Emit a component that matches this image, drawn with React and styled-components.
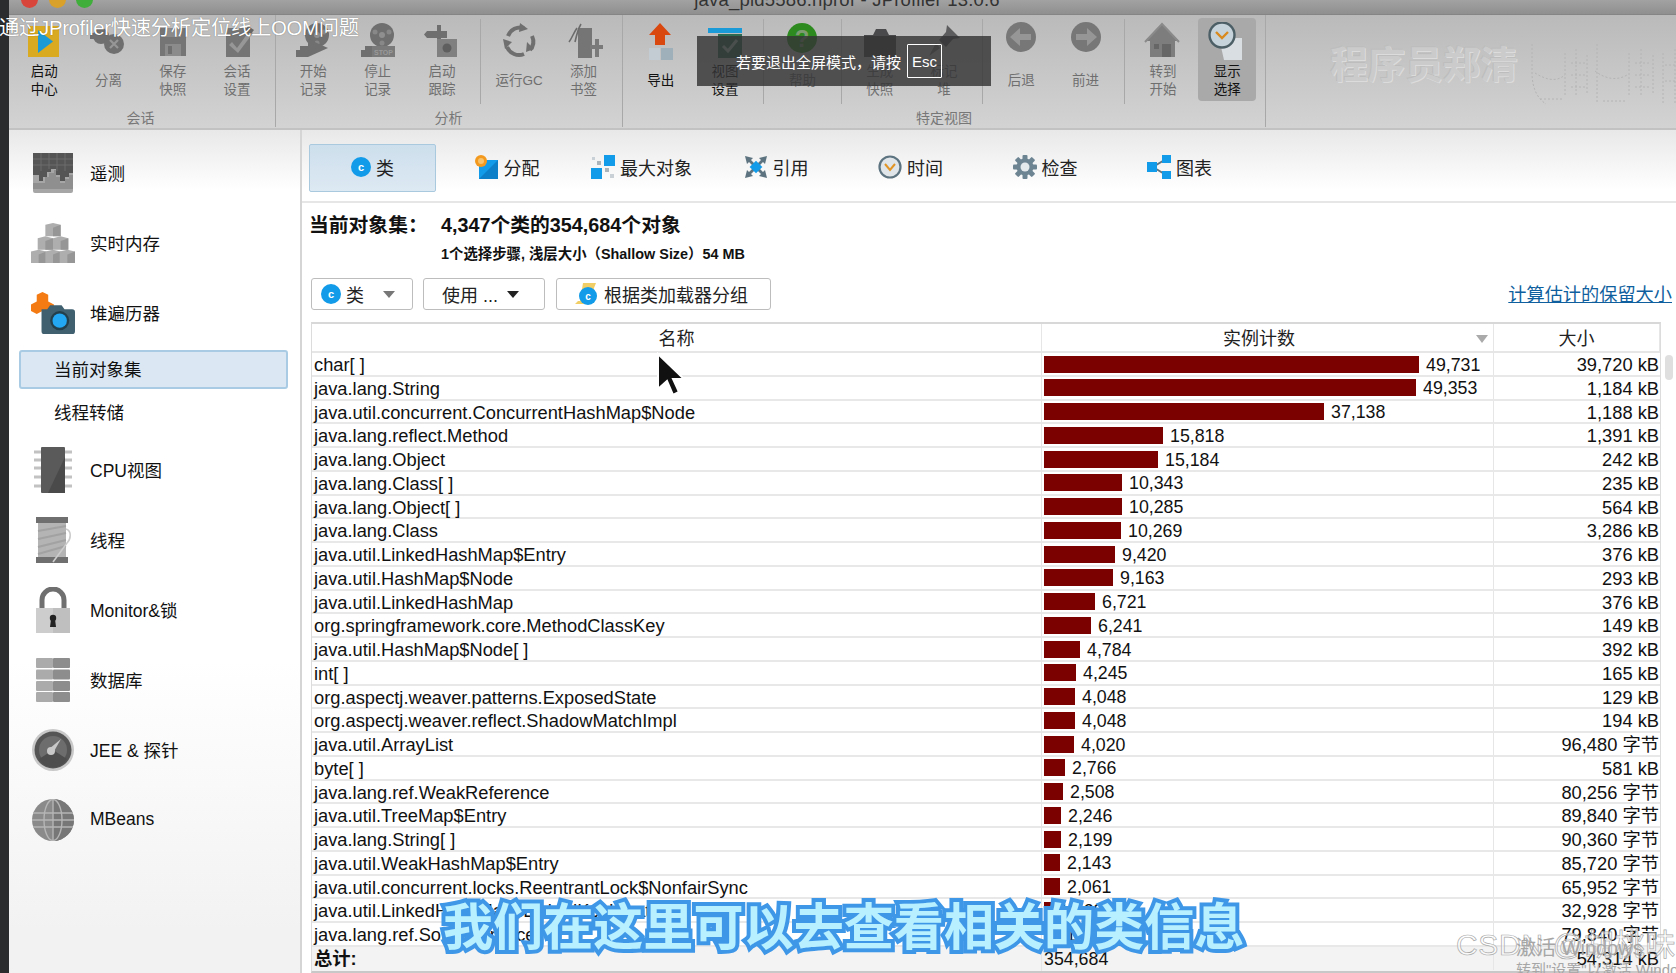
import React from "react";
import styled, { createGlobalStyle } from "styled-components";

const F = `"Liberation Sans", "Noto Sans CJK SC", sans-serif`;

const Global = createGlobalStyle`
  html, body { margin: 0; padding: 0; height: 100%; overflow: hidden; background: #fff; }
  * { box-sizing: border-box; }
  body { font-family: ${F}; color: #111; }
`;

const Page = styled.div`
  position: relative; width: 1676px; height: 973px; overflow: hidden;
  display: flex; background: #fff;
`;
const Edge = styled.div`width: 9px; flex: none; background: #2b2c2e;`;
const Body = styled.div`flex: 1; min-width: 0; display: flex; flex-direction: column;`;
const TitleBar = styled.div`
  height: 15px; flex: none; position: relative; overflow: hidden;
  background: linear-gradient(#a2a2a2, #8f8f8f);
  border-bottom: 1px solid #858585;
  display: flex; justify-content: center;
`;
const Lights = styled.div`
  position: absolute; left: 12px; top: -9px; display: flex; gap: 10.5px;
`;
const Light = styled.span`
  width: 17px; height: 17px; border-radius: 50%; background: ${p => p.$c};
`;
const TitleText = styled.div`
  font-size: 18.5px; line-height: 18px; color: #333; margin-top: -9px; margin-left: 9px; letter-spacing: .2px; white-space: nowrap;
`;
const Toolbar = styled.div`
  height: 115px; flex: none; display: flex; padding-left: 3px; position: relative;
  background: linear-gradient(#bababa, #d3d3d3);
  border-bottom: 2px solid #c2c2c2;
`;
const Group = styled.div`
  display: flex; flex-direction: column; align-items: center; height: 112px;
  border-right: 1px solid #a8a8a8; flex: none;
  padding: 0 6px 0 ${p => p.$pl}px;
`;
const GroupRow = styled.div`display: flex; height: 88px; padding-top: 3px;`;
const GroupName = styled.div`
  font-size: 14px; line-height: 18px; color: #777; margin-top: 6px;
`;
const ToolBtn = styled.div`
  width: ${p => p.$active ? 58 : 64.3}px; height: 83px; flex: none; display: flex; flex-direction: column; align-items: center;
  margin: 0 ${p => p.$active ? 3.15 : 0}px;
  border-radius: 4px; background: ${p => p.$active ? "#a9a9a9" : "transparent"};
`;
const ToolIcon = styled.div`
  width: 38px; height: 40px; flex: none; display: flex; align-items: center; justify-content: center;
  margin-top: 3px;
`;
const ToolLabel = styled.div`
  flex: 1; display: flex; align-items: center; text-align: center; justify-content: center;
  font-size: 13.5px; line-height: 18px; margin-top: -1px;
  color: ${p => p.$dark ? "#111" : "#6f6f6f"}; white-space: pre-line;
`;
const VSep = styled.div`width: 1px; height: 85px; margin: 1px 6px 0; background: #a8a8a8; flex: none;`;
const Stamp = styled.div`
  flex: none; margin-left: 64px; margin-top: 28px; height: 44px;
  font-size: 37.5px; line-height: 44px; font-weight: 700; color: #cbcbcb;
  text-shadow: 1px 1px 0 #dcdcdc, -1px -1px 0 #bdbdbd;
`;
const StampArt = styled.svg`flex: none; margin-left: 13px; margin-top: 26px;`;

const FsOverlay = styled.div`
  position: absolute; left: 697px; top: 36px; width: 294px; height: 50px; z-index: 5;
  background: rgba(52,52,54,.82); color: #fff; font-size: 15px;
  display: flex; align-items: center; justify-content: flex-start; padding-left: 39px; gap: 6px;
`;
const EscKey = styled.span`
  width: 35px; height: 34px; border: 1px solid #fff; border-radius: 1px; display: flex; align-items: center; justify-content: center;
  font-size: 15px;
`;
const VideoTitle = styled.div`
  position: absolute; left: -1px; top: 16px; z-index: 6; color: #fff; font-size: 20.4px; line-height: 24px; letter-spacing: -.35px; white-space: nowrap;
  text-shadow: 0 0 1px rgba(0,0,0,.5);
`;

const Main = styled.div`flex: 1; display: flex; min-height: 0;`;
const Side = styled.div`
  width: 293px; flex: none; border-right: 2px solid #d5d5d5; padding-top: 8px;
  background: linear-gradient(#e8e8e8 0, #fff 60px, #fff 530px, #f2f2f2 800px);
`;
const SideItem = styled.div`
  height: 70px; display: flex; align-items: center; font-size: 17.5px;
`;
const SideLabel = styled.span`margin-top: -2px;`;
const SideIcon = styled.div`
  width: 44px; height: 46px; margin-left: 22px; margin-right: 15px; flex: none;
  display: flex; align-items: center; justify-content: center;
`;
const SubList = styled.div`height: 87px; padding-top: 2px;`;
const SubItem = styled.div`
  height: ${p => p.$sel ? 39 : 46}px; margin: 0 12px 0 10px; display: flex; align-items: center; padding-left: 35px; font-size: 17.5px;
  padding-bottom: 2px;
  ${p => p.$sel && "background:#dbe8f3; border: 2px solid #a9cce4; border-radius: 3px; padding-left: 33px;"}
`;
const Content = styled.div`flex: 1; min-width: 0; display: flex; flex-direction: column;`;
const TabBar = styled.div`
  height: 73px; flex: none; display: flex; gap: 7.5px; padding: 14px 0 0 7px;
  background: linear-gradient(#e8e8e8, #fff 60px);
  border-bottom: 2px solid #e6e6e6;
`;
const Tab = styled.div`
  width: 127px; height: 48px; display: flex; align-items: center; justify-content: center; gap: 5px; font-size: 18px;
  padding-bottom: 2px;
  border-radius: 2px; color: #222;
  border: 1px solid ${p => p.$sel ? "#a9c9df" : "transparent"};
  background: ${p => p.$sel ? "linear-gradient(#cddfec,#dde9f3)" : "transparent"};
`;
const Info = styled.div`
  height: 75px; flex: none; padding: 10px 0 0 7px; font-weight: 700;
`;
const InfoRow = styled.div`display: flex; font-size: 19.8px; line-height: 24px;`;
const InfoLabel = styled.div`width: 132px; white-space: nowrap;`;
const InfoSub = styled.div`font-size: 14.4px; line-height: 20px; margin: 7px 0 0 132px;`;
const Actions = styled.div`
  height: 44px; flex: none; display: flex; padding: 0 4px 0 9px; align-items: flex-start;
`;
const Btn = styled.div`
  height: 32px; flex: none; width: ${p => p.$w}px; margin-right: ${p => p.$mr || 0}px;
  border: 1px solid #bdbdbd; border-radius: 3px; background: #fff; font-size: 18px;
  display: flex; align-items: center; gap: 5px; padding-left: ${p => p.$pl}px; color: #222;
`;
const Tri = styled.span`
  width: 0; height: 0; border-left: 6px solid transparent; border-right: 6px solid transparent;
  border-top: 7px solid ${p => p.$c}; margin-left: ${p => p.$ml}px;
`;
const CalcLink = styled.a`
  margin-left: auto; font-size: 18.2px; line-height: 34px; color: #0f5f9e; text-decoration: underline; white-space: nowrap;
`;
const TableWrap = styled.div`
  flex: 1; min-height: 0; margin-left: 9px; margin-right: 15px; border: 1px solid #dcdcdc; border-top: 2px solid #d8d8d8; border-bottom: 2px solid #c8c8c8;
  position: relative; display: flex; flex-direction: column;
`;
const HeadRow = styled.div`
  height: 29px; flex: none; display: grid; grid-template-columns: 730px 452px 1fr;
  border-bottom: 2px solid #e6e6e6; font-size: 18px; color: #222;
`;
const HeadCell = styled.div`
  display: flex; align-items: center; justify-content: center; position: relative;
  border-right: 1px solid #e6e6e6; padding-bottom: 3px; padding-right: ${p => p.$pr || 0}px;
`;
const SortMark = styled.span`
  position: absolute; right: 5px; top: 11px; width: 0; height: 0;
  border-left: 6px solid transparent; border-right: 6px solid transparent; border-top: 8px solid #aaa;
`;
const Row = styled.div`
  height: 23.75px; flex: none; display: grid; grid-template-columns: 730px 452px 1fr; font-size: 18.3px;
  border-bottom: 2px solid #e8e8e8; color: #111;
`;
const TotalRow = styled(Row)`background: #f3f3f3; border-bottom: 0; flex: 1; height: auto; align-items: center;`;
const NameCell = styled.div`
  padding-left: 2px; line-height: 24px; white-space: nowrap; border-right: 1px solid #e6e6e6; overflow: hidden;
  font-weight: ${p => p.$b ? 700 : 400};
`;
const CountCell = styled.div`
  display: flex; align-items: center; padding-left: 2px; border-right: 1px solid #e6e6e6; height: 22px; gap: 7px; font-size: 17.8px;
`;
const CountText = styled.span`padding-top: 2px;`;
const Bar = styled.span`height: 17px; background: #7b0000; flex: none;`;
const SizeCell = styled.div`text-align: right; padding-right: 1px; line-height: 24px; white-space: nowrap;`;
const Scroll = styled.div`
  position: absolute; left: 1665px; top: 355px; width: 8px; height: 25px; background: #dfdfdf; border-radius: 4px;
`;
const Pointer = styled.svg`position: absolute; left: 655px; top: 352px; z-index: 4;`;
const Subtitle = styled.div`
  position: absolute; left: 443px; top: 895px; z-index: 7; font-size: 50.1px; line-height: 66px; font-weight: 700; white-space: nowrap;
  color: #b8f0ff; -webkit-text-stroke: 8px #3f97e8; paint-order: stroke fill;
`;
const Mark = styled.div`
  position: absolute; left: 1456px; top: 927px; z-index: 8; color: rgba(255,255,255,.55); font-size: 30px; line-height: 36px; white-space: nowrap; letter-spacing: .7px;
  -webkit-text-stroke: .7px #a9a9a9;
`;
const WinMark = styled.div`
  position: absolute; left: 1516px; top: ${p => p.$t}px; z-index: 8; color: #a6a6a6; font-size: ${p => p.$s}px; line-height: 20px; white-space: nowrap;
`;

/* ---------- icons ---------- */
const Ico = ({ s = 38, h, children }) => (
  <svg width={s} height={h || s} viewBox="0 0 38 38">{children}</svg>
);
const IStart = () => (
  <Ico><rect x="3" y="4" width="31" height="31" fill="#d9a91f" /><path d="M13 8l15 11.5L13 31z" fill="#1b9ad8" /></Ico>
);
const IDetach = () => (
  <Ico><circle cx="12" cy="14" r="8" fill="#6f6f6f" /><rect x="1" y="11" width="10" height="6" fill="#6f6f6f" /><circle cx="25" cy="22" r="10" fill="#6f6f6f" /><path d="M21 18l8 8m0-8l-8 8" stroke="#969696" strokeWidth="2.2" /></Ico>
);
const ISave = () => (
  <Ico><path d="M6 6h26v28H6z" fill="#757575" /><rect x="11" y="6" width="16" height="9" fill="#8b8b8b" /><rect x="11" y="22" width="16" height="12" fill="#8b8b8b" /><rect x="14" y="24" width="4" height="8" fill="#6f6f6f" /></Ico>
);
const ISession = () => (
  <Ico><rect x="8" y="6" width="24" height="29" fill="#757575" /><path d="M14 20l5 6L32 8l3 3-15 20-9-8z" fill="#979797" /><path d="M30 4l6 4-4 5-5-4z" fill="#666" /></Ico>
);
const IRec = ({ stop }) => (
  <Ico>
    <circle cx="23" cy="13" r="12" fill="#6f6f6f" />
    <circle cx="23" cy="13" r="3" fill="#8f8f8f" />
    <circle cx="16" cy="10" r="2.5" fill="#888" /><circle cx="30" cy="10" r="2.5" fill="#888" /><circle cx="23" cy="21" r="2.5" fill="#888" />
    <path d="M6 24h8v11H2v-7h4z" fill="#6f6f6f" />
    {stop ? <g><rect x="13" y="24" width="23" height="11" fill="#7a7a7a" /><text x="24.5" y="33" textAnchor="middle" fontSize="7" fontWeight="700" fontFamily="Liberation Sans" fill="#999">STOP</text></g> : <path d="M14 17v18l20-9z" fill="#6f6f6f" />}
  </Ico>
);
const ITrack = () => (
  <Ico><path d="M14 3h4v6h6v7h-6v4h-4v-4H4l-3-3.5L4 9h10z" fill="#6f6f6f" /><rect x="14" y="17" width="20" height="18" fill="#808080" /><circle cx="24" cy="26" r="4.5" fill="#5f5f5f" /></Ico>
);
const IGc = () => (
  <Ico>
    <g fill="none" stroke="#6f6f6f" strokeWidth="4">
      <path d="M8 14a13 13 0 0 1 16-8" /><path d="M32 14a13 13 0 0 1-2 14" /><path d="M24 32a13 13 0 0 1-17-7" />
    </g>
    <path d="M20 1l8 6-9 3zM34 27l-8 3 1-10zM3 17l9 3-7 7z" fill="#6f6f6f" />
  </Ico>
);
const IBookmark = () => (
  <Ico><rect x="13" y="6" width="14" height="30" fill="#757575" /><path d="M12 6C8 12 7 16 4 20M16 2c-3 5-4 9-6 18" fill="none" stroke="#6c6c6c" strokeWidth="1.6" /><path d="M25 23h5v-6h4v6h5v4h-5v8h-4v-8h-5z" fill="#7a7a7a" /></Ico>
);
const IExport = () => (
  <Ico><path d="M18 1l11 12h-6v10h-10V13H7z" fill="#d9480f" /><rect x="7" y="26" width="11" height="12" fill="#c3ccd2" /><rect x="19" y="26" width="12" height="12" fill="#9fb0ba" /></Ico>
);
const IView = () => (
  <Ico><rect x="2" y="6" width="34" height="5" fill="#1b9ad8" /><rect x="12" y="12" width="24" height="24" fill="#2d6b52" /><path d="M17 24l5 5 9-11" fill="none" stroke="#a9c9b8" strokeWidth="3" /></Ico>
);
const IHelp = () => (
  <Ico><circle cx="19" cy="16" r="15" fill="#2d8a1e" /><text x="19" y="25" textAnchor="middle" fontSize="24" fontWeight="700" fontFamily="Liberation Sans" fill="#7d9a70">?</text></Ico>
);
const ICam = () => (
  <Ico><path d="M3 13h9l3-6h10l3 6h7v22H3z" fill="#4a4a4c" /></Ico>
);
const IPin = () => (
  <Ico><path d="M22 3l13 13-7 1-7 8-7-7 7-8z" fill="#5c5c5e" /><path d="M11 21l-7 13 11-8z" fill="#747476" /></Ico>
);
const IArrow = ({ right }) => (
  <Ico>
    <circle cx="19" cy="15" r="15" fill="#777" />
    <path d={right ? "M9 12h11V6l10 9-10 9v-6H9z" : "M29 12H18V6L8 15l10 9v-6h11z"} fill="#969696" />
  </Ico>
);
const IHome = () => (
  <Ico><path d="M18 2L2 19h4v16h25V19h4z" fill="#7d7d7d" /><path d="M1 20L18 2l17 18" fill="none" stroke="#8a8a8a" strokeWidth="2" /><rect x="18" y="22" width="9" height="13" fill="#666" /><rect x="10" y="22" width="5" height="5" fill="#666" /></Ico>
);
const IClockSel = () => (
  <Ico>
    <path d="M11 16h23v22H16z" fill="#d9dee2" />
    <circle cx="14" cy="13" r="12.5" fill="#c7d3da" stroke="#4c5e66" strokeWidth="2.4" />
    <path d="M8 10l6 6 6-6" fill="none" stroke="#d98a1f" strokeWidth="2.4" />
  </Ico>
);

const STelemetry = () => (
  <svg width="40" height="40" viewBox="0 0 40 40">
    <rect width="40" height="40" rx="2" fill="#a6a6a6" />
    <path d="M0 0h40v20h-4v4h-4v4h-5v-6h-4v-6h-5v3h-4v5h-4v4H6v-6H0z" fill="#555" />
    <path d="M12 24h4v-4h5v-3h2v7h4v6h5v-4h4v-4h4v14H0V30h12z" fill="#8f8f8f" />
    <path d="M0 6h40M0 12h40M8 0v18M16 0v16M24 0v18M32 0v18" stroke="#6c6c6c" strokeWidth="1" />
  </svg>
);
const SMem = () => (
  <svg width="46" height="42" viewBox="0 0 46 42">
    {[[15,0],[7,14],[23,14],[0,28],[15,28],[30,28]].map(([x,y],i)=>(
      <g key={i}><path d={`M${x} ${y+2}l8-2 8 2v12H${x}z`} fill="#aeaeae" /><path d={`M${x+8} ${y+5}l8-3v12h-8z`} fill="#969696" /></g>
    ))}
  </svg>
);
const SHeap = () => (
  <svg width="46" height="44" viewBox="0 0 46 44">
    <path d="M12 0l6 3v7l6 3v7l-6 3-6-3-6 3-6-3v-7l6-3V3z" fill="#f47b13" />
    <path d="M11 18h6l3-4h12l3 4h8a3 3 0 0 1 3 3v20a3 3 0 0 1-3 3H14a3 3 0 0 1-3-3z" fill="#40606f" />
    <circle cx="30" cy="30" r="10" fill="#243f4c" /><circle cx="30" cy="30" r="7.5" fill="#23a7f2" />
  </svg>
);
const SCpu = () => (
  <svg width="38" height="46" viewBox="0 0 38 46">
    <path d="M0 5h38M0 13h38M0 21h38M0 30h38M0 39h38" stroke="#c2c2c2" strokeWidth="3" />
    <rect x="7" y="0" width="24" height="46" rx="1" fill="#5a5a5a" />
    <path d="M31 10L14 46h17z" fill="#4a4a4a" />
  </svg>
);
const SThread = () => (
  <svg width="40" height="46" viewBox="0 0 40 46">
    <rect x="3" y="0" width="32" height="6" fill="#6f6f6f" /><rect x="3" y="40" width="32" height="6" fill="#6f6f6f" />
    <rect x="5" y="6" width="28" height="34" fill="#b4b4b4" />
    <path d="M5 14l28-5M5 22l28-6M5 30l28-7M5 37l28-8" stroke="#a2a2a2" strokeWidth="2" />
    <path d="M33 12c6 2 5 10 1 14l-14 19" fill="none" stroke="#ccc" strokeWidth="1.6" />
  </svg>
);
const SLock = () => (
  <svg width="34" height="46" viewBox="0 0 34 46">
    <path d="M6 22V13a11 11 0 0 1 22 0v9" fill="none" stroke="#6f6f6f" strokeWidth="5" />
    <rect y="21" width="34" height="25" fill="#cdcdcd" /><rect x="17" y="21" width="17" height="25" fill="#bfbfbf" />
    <circle cx="17" cy="31" r="3.2" fill="#222" /><path d="M15 32h4l1 8h-6z" fill="#222" />
  </svg>
);
const SDb = () => (
  <svg width="34" height="44" viewBox="0 0 34 44">
    {[0,11.5,23,34].map((y,i)=>(
      <g key={i}><rect y={y} width="17" height="10" rx="1" fill="#ababab" /><rect x="17" y={y} width="17" height="10" rx="1" fill="#8d8d8d" /></g>
    ))}
  </svg>
);
const SJee = () => (
  <svg width="42" height="42" viewBox="0 0 42 42">
    <circle cx="21" cy="21" r="21" fill="#c8c8c8" /><circle cx="21" cy="21" r="18.5" fill="#555" />
    <circle cx="21" cy="21" r="14" fill="#6d6d6d" /><path d="M7 30a16 16 0 0 0 28 0L21 21z" fill="#4d4d4d" />
    <circle cx="19" cy="22" r="4" fill="#c8c8c8" /><path d="M17 20l12-10-8 14z" fill="#c8c8c8" />
  </svg>
);
const SGlobe = () => (
  <svg width="42" height="42" viewBox="0 0 42 42">
    <circle cx="21" cy="21" r="21" fill="#8a8a8a" /><path d="M21 0a21 21 0 0 1 0 42z" fill="#777" />
    <g fill="none" stroke="#b5b5b5" strokeWidth="1.4">
      <ellipse cx="21" cy="21" rx="9" ry="20.5" /><path d="M21 0v42M1 14h40M1 28h40M0 21h42" />
    </g>
  </svg>
);
const CBadge = ({ s = 20 }) => (
  <svg width={s} height={s} viewBox="0 0 20 20"><circle cx="10" cy="10" r="10" fill="#129be8" /><text x="10" y="14" textAnchor="middle" fontSize="11" fontWeight="700" fontFamily="Liberation Sans" fill="#fff">c</text></svg>
);
const TAlloc = () => (
  <svg width="24" height="24" viewBox="0 0 24 24"><rect x="4" y="5" width="19" height="19" fill="#129be8" /><path d="M23 5v19H4z" fill="#0d7fc8" /><circle cx="6" cy="6" r="6" fill="#f39a1e" /><circle cx="6" cy="6" r="3" fill="#f7c26a" /></svg>
);
const TBig = () => (
  <svg width="24" height="24" viewBox="0 0 24 24"><rect x="13" y="0" width="11" height="11" fill="#129be8" /><rect x="0" y="13" width="11" height="11" fill="#129be8" /><rect x="14" y="13" width="4" height="4" fill="#aab4ba" /><rect x="19" y="19" width="4" height="4" fill="#c9d1d6" /><rect x="6" y="6" width="4" height="4" fill="#aab4ba" /><rect x="1" y="2" width="3" height="3" fill="#c9d1d6" /></svg>
);
const TRef = () => (
  <svg width="24" height="24" viewBox="0 0 24 24"><path d="M1 1l8 2-2 2 5 5 5-5-2-2 8-2-2 8-2-2-5 5 5 5 2-2 2 8-8-2 2-2-5-5-5 5 2 2-8 2 2-8 2 2 5-5-5-5-2 2z" fill="#5d7480" /><rect x="7.5" y="7.5" width="9" height="9" transform="rotate(45 12 12)" fill="#129be8" /></svg>
);
const TClock = () => (
  <svg width="24" height="24" viewBox="0 0 24 24"><circle cx="12" cy="12" r="10.5" fill="#dfe5e8" stroke="#5d7480" strokeWidth="2.2" /><path d="M7 9l5 6 5-6" fill="none" stroke="#e29425" strokeWidth="2" /></svg>
);
const TGear = () => (
  <svg width="24" height="24" viewBox="0 0 24 24">
    <g fill="#6d8593">{[0,45,90,135].map(a=><rect key={a} x="9.5" y="0" width="5" height="24" rx="1" transform={`rotate(${a} 12 12)`} />)}</g>
    <circle cx="12" cy="12" r="8.5" fill="#6d8593" /><circle cx="12" cy="12" r="4.5" fill="#e4e9ec" />
  </svg>
);
const TGraph = () => (
  <svg width="24" height="24" viewBox="0 0 24 24"><path d="M6 12L19 4M6 12l13 8" stroke="#5d7480" strokeWidth="2" /><rect x="0" y="7" width="10" height="10" fill="#129be8" /><rect x="15" y="0" width="9" height="8" fill="#129be8" /><rect x="15" y="16" width="9" height="8" fill="#129be8" /></svg>
);
const GroupIcon = () => (
  <svg width="24" height="24" viewBox="0 0 24 24"><path d="M8 1h13l-2 5-2 16H0l3-3h2z" fill="#f2cf66" /><circle cx="13" cy="14" r="9" fill="#129be8" /><text x="13" y="18" textAnchor="middle" fontSize="10" fontWeight="700" fontFamily="Liberation Sans" fill="#fff">c</text></svg>
);

/* ---------- data ---------- */
const rows = [
  ["char[ ]", 49731, "39,720 kB"], ["java.lang.String", 49353, "1,184 kB"],
  ["java.util.concurrent.ConcurrentHashMap$Node", 37138, "1,188 kB"], ["java.lang.reflect.Method", 15818, "1,391 kB"],
  ["java.lang.Object", 15184, "242 kB"], ["java.lang.Class[ ]", 10343, "235 kB"],
  ["java.lang.Object[ ]", 10285, "564 kB"], ["java.lang.Class", 10269, "3,286 kB"],
  ["java.util.LinkedHashMap$Entry", 9420, "376 kB"], ["java.util.HashMap$Node", 9163, "293 kB"],
  ["java.util.LinkedHashMap", 6721, "376 kB"], ["org.springframework.core.MethodClassKey", 6241, "149 kB"],
  ["java.util.HashMap$Node[ ]", 4784, "392 kB"], ["int[ ]", 4245, "165 kB"],
  ["org.aspectj.weaver.patterns.ExposedState", 4048, "129 kB"], ["org.aspectj.weaver.reflect.ShadowMatchImpl", 4048, "194 kB"],
  ["java.util.ArrayList", 4020, "96,480 字节"], ["byte[ ]", 2766, "581 kB"],
  ["java.lang.ref.WeakReference", 2508, "80,256 字节"], ["java.util.TreeMap$Entry", 2246, "89,840 字节"],
  ["java.lang.String[ ]", 2199, "90,360 字节"], ["java.util.WeakHashMap$Entry", 2143, "85,720 字节"],
  ["java.util.concurrent.locks.ReentrantLock$NonfairSync", 2061, "65,952 字节"], ["java.util.LinkedHashMap$LinkedKeyIterator", 1029, "32,928 字节"],
  ["java.lang.ref.SoftReference", 1994, "79,840 字节"],
];
const fmt = n => n.toLocaleString("en-US");

const T = ({ icon, label, dark, active }) => (
  <ToolBtn $active={active}><ToolIcon>{icon}</ToolIcon><ToolLabel $dark={dark}>{label}</ToolLabel></ToolBtn>
);
const side = [
  [<STelemetry />, "遥测"], [<SMem />, "实时内存"], [<SHeap />, "堆遍历器"],
];
const side2 = [
  [<SCpu />, "CPU视图"], [<SThread />, "线程"], [<SLock />, "Monitor&锁"], [<SDb />, "数据库"], [<SJee />, "JEE & 探针"], [<SGlobe />, "MBeans"],
];
const tabs = [
  [<CBadge />, "类", true], [<TAlloc />, "分配"], [<TBig />, "最大对象"], [<TRef />, "引用"], [<TClock />, "时间"], [<TGear />, "检查"], [<TGraph />, "图表"],
];

export default function App() {
  return (
    <Page>
      <Global />
      <Edge />
      <Body>
        <TitleBar>
          <Lights><Light $c="#d8453a" /><Light $c="#d9a02a" /><Light $c="#3fae3a" /></Lights>
          <TitleText>java_pid5586.hprof - JProfiler 13.0.6</TitleText>
        </TitleBar>
        <Toolbar>
          <Group $pl={0}>
            <GroupRow>
              <T icon={<IStart />} label={"启动\n中心"} dark />
              <T icon={<IDetach />} label="分离" />
              <T icon={<ISave />} label={"保存\n快照"} />
              <T icon={<ISession />} label={"会话\n设置"} />
            </GroupRow>
            <GroupName>会话</GroupName>
          </Group>
          <Group $pl={5}>
            <GroupRow>
              <T icon={<IRec />} label={"开始\n记录"} />
              <T icon={<IRec stop />} label={"停止\n记录"} />
              <T icon={<ITrack />} label={"启动\n跟踪"} />
              <VSep />
              <T icon={<IGc />} label="运行GC" />
              <T icon={<IBookmark />} label={"添加\n书签"} />
            </GroupRow>
            <GroupName>分析</GroupName>
          </Group>
          <Group $pl={6}>
            <GroupRow>
              <T icon={<IExport />} label="导出" dark />
              <T icon={<IView />} label={"视图\n设置"} dark />
              <VSep />
              <T icon={<IHelp />} label="帮助" />
              <VSep />
              <T icon={<ICam />} label={"生成\n快照"} />
              <T icon={<IPin />} label={"标记\n堆"} />
              <VSep />
              <T icon={<IArrow />} label="后退" />
              <T icon={<IArrow right />} label="前进" />
              <VSep />
              <T icon={<IHome />} label={"转到\n开始"} />
              <T icon={<IClockSel />} label={"显示\n选择"} dark active />
            </GroupRow>
            <GroupName>特定视图</GroupName>
          </Group>
          <Stamp>程序员郑清</Stamp>
          <StampArt width="146" height="66" viewBox="0 0 146 66">
            <g fill="none" stroke="#b4b4b4" strokeWidth="1" strokeDasharray="2 2">
              <path d="M1 3v28c0 20 8 28 14 32M4 32c10 6 20 10 30 2M9 58h22" />
              <path d="M34 12v44M45 8v48M56 14v40M40 22h14M40 34h14M40 46h14" />
              <path d="M66 3v60M64 30c10 8 22 10 32 4M72 60h24" />
              <path d="M98 12v44M110 8v48M122 14v40M104 22h14M104 34h14M104 46h14" />
              <path d="M132 12v50M144 8v54M134 24h12M134 40h12" />
            </g>
          </StampArt>
        </Toolbar>
        <Main>
          <Side>
            {side.map(([i, l]) => <SideItem key={l}><SideIcon>{i}</SideIcon><SideLabel>{l}</SideLabel></SideItem>)}
            <SubList>
              <SubItem $sel>当前对象集</SubItem>
              <SubItem>线程转储</SubItem>
            </SubList>
            {side2.map(([i, l]) => <SideItem key={l}><SideIcon>{i}</SideIcon><SideLabel>{l}</SideLabel></SideItem>)}
          </Side>
          <Content>
            <TabBar>
              {tabs.map(([i, l, s]) => <Tab key={l} $sel={s}>{i}{l}</Tab>)}
            </TabBar>
            <Info>
              <InfoRow><InfoLabel>当前对象集：</InfoLabel><div>4,347个类的354,684个对象</div></InfoRow>
              <InfoSub>1个选择步骤, 浅层大小（Shallow Size）54 MB</InfoSub>
            </Info>
            <Actions>
              <Btn $w={102} $mr={10} $pl={9}><CBadge />类<Tri $c="#777" $ml={14} /></Btn>
              <Btn $w={122} $mr={11} $pl={18}>使用 ...<Tri $c="#222" $ml={4} /></Btn>
              <Btn $w={215} $pl={18}><GroupIcon />根据类加载器分组</Btn>
              <CalcLink>计算估计的保留大小</CalcLink>
            </Actions>
            <TableWrap>
              <HeadRow>
                <HeadCell>名称</HeadCell>
                <HeadCell $pr={17}>实例计数<SortMark /></HeadCell>
                <HeadCell>大小</HeadCell>
              </HeadRow>
              {rows.map(([n, c, s]) => (
                <Row key={n}>
                  <NameCell>{n}</NameCell>
                  <CountCell><Bar style={{ width: Math.round(c * 0.00754) }} /><CountText>{fmt(c)}</CountText></CountCell>
                  <SizeCell>{s}</SizeCell>
                </Row>
              ))}
              <TotalRow>
                <NameCell $b>总计:</NameCell>
                <CountCell><CountText>354,684</CountText></CountCell>
                <SizeCell>54,314 kB</SizeCell>
              </TotalRow>
            </TableWrap>
          </Content>
        </Main>
      </Body>
      <FsOverlay>若要退出全屏模式，请按<EscKey>Esc</EscKey></FsOverlay>
      <VideoTitle>通过JProfiler快速分析定位线上OOM问题</VideoTitle>
      <Scroll />
      <Pointer width="30" height="46" viewBox="0 0 30 46">
        <path d="M3 2v35l9-8 6 14 6-3-6-13h11z" fill="#111" stroke="#fff" strokeWidth="2" />
      </Pointer>
      <Subtitle>我们在这里可以去查看相关的类信息</Subtitle>
      <Mark>CSDN @胡桃味生</Mark>
      <WinMark $t={938} $s={20}>激活 Windows</WinMark>
      <WinMark $t={960} $s={15}>转到"设置"以激活 Windows。</WinMark>
    </Page>
  );
}
